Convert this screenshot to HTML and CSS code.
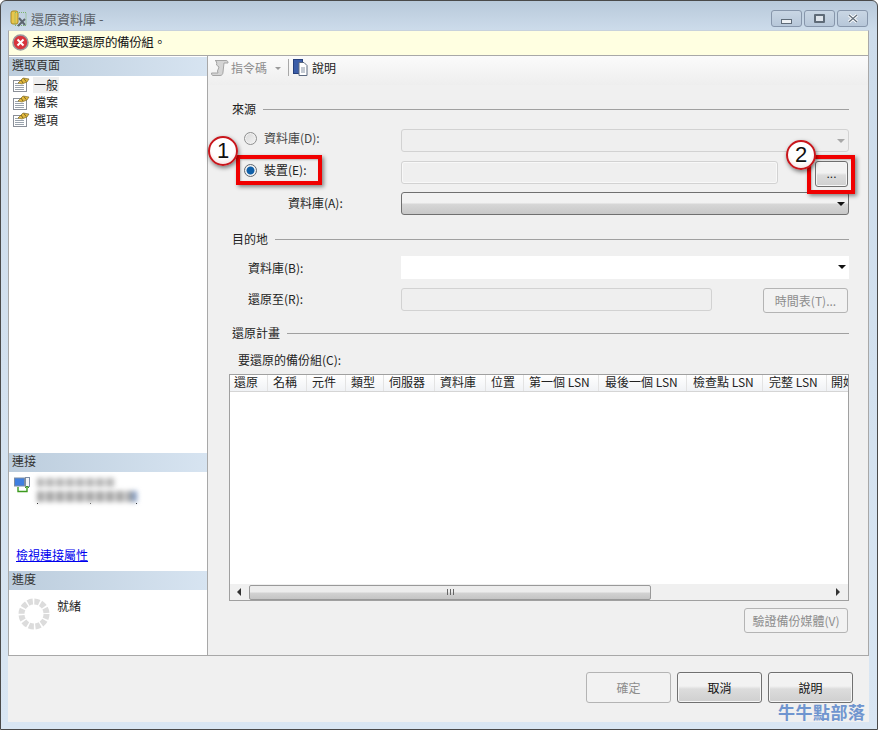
FILE: index.html
```html
<!DOCTYPE html>
<html lang="zh-Hant">
<head>
  <meta charset="UTF-8">
  <title>還原資料庫</title>
  <link rel="stylesheet" href="styles.css">
</head>
<body>
  <svg class="defs" width="0" height="0">
    <symbol id="page" viewBox="0 0 17 15">
      <rect x="0.5" y="3.5" width="13" height="11" fill="#fff" stroke="#8a8f98"/>
      <path d="M2 6.5h4M2 8.5h9M2 10.500h9M2 12.500h9" stroke="#9aa3ad"/>
      <path d="M5 6l5-5 6 1-2 3-5 2z" fill="#e3b93c" stroke="#6d5a1c" stroke-width="0.6"/>
      <path d="M8 3l2 3M11 1.500l2 3" stroke="#5f4f1a" stroke-width="0.8"/>
    </symbol>
  </svg>

  <div class="window">
    <div class="titlebar">
      <svg class="title-icon" width="18" height="18" viewBox="0 0 18 18">
        <rect x="1" y="1" width="7" height="13" rx="2" fill="#e8c64c" stroke="#a98a25"/>
        <rect x="5" y="2.500" width="11" height="13" fill="none" stroke="#7cb46a" stroke-dasharray="1 1"/>
        <path d="M8 16l7-7M9 8l6 7" stroke="#5d6670" stroke-width="2"/>
      </svg>
      <span class="title-text">還原資料庫 -</span>
      <div class="win-buttons">
        <div class="win-btn"><span class="win-min"></span></div>
        <div class="win-btn"><span class="win-max"></span></div>
        <div class="win-btn">
          <svg width="12" height="9" viewBox="0 0 12 9"><path d="M2 1l8 7M10 1L2 8" stroke="#fff" stroke-width="3"/><path d="M2 1l8 7M10 1L2 8" stroke="#5f6b78" stroke-width="1.200"/></svg>
        </div>
      </div>
    </div>

    <div class="client">
      <div class="message-bar">
        <svg width="17" height="17" viewBox="0 0 17 17">
          <circle cx="8.500" cy="8.500" r="7.500" fill="#d8343c" stroke="#9a9a9e" stroke-width="1.600"/>
          <path d="M5.500 5.500l6 6M11.500 5.500l-6 6" stroke="#fff" stroke-width="2"/>
        </svg>
        <span>未選取要還原的備份組。</span>
      </div>

      <div class="main">
        <div class="sidebar">
          <div class="side-header">選取頁面</div>
          <div class="page-list">
            <div class="page-item"><svg width="17" height="15"><use href="#page"/></svg><span class="current">一般</span></div>
            <div class="page-item"><svg width="17" height="15"><use href="#page"/></svg><span>檔案</span></div>
            <div class="page-item"><svg width="17" height="15"><use href="#page"/></svg><span>選項</span></div>
          </div>

          <div class="side-header">連接</div>
          <div class="conn-box">
            <svg width="16" height="16" viewBox="0 0 16 16">
              <rect x="0.500" y="1" width="10" height="8" fill="#3f7fe0" stroke="#7d8da3"/>
              <rect x="11.500" y="0.500" width="4" height="9" fill="#f2f4f7" stroke="#7d8da3"/>
              <path d="M4 10v4.500h9V10" fill="none" stroke="#3c9a1e" stroke-width="1.400"/>
              <path d="M11 11l2-2 2 2" fill="none" stroke="#3c9a1e"/>
            </svg>
            <div class="conn-blur">
              <div class="blur-line first"></div>
              <div class="blur-line second"></div>
              <div class="blur-ticks"></div>
            </div>
          </div>
          <a class="conn-link" href="#">檢視連接屬性</a>

          <div class="side-header">進度</div>
          <div class="progress-box">
            <svg width="32" height="32" viewBox="0 0 32 32">
              <circle cx="16" cy="16" r="12.500" fill="none" stroke="#dcdcdc" stroke-width="6" stroke-dasharray="5 1.540"/>
            </svg>
            <span>就緒</span>
          </div>
        </div>

        <div class="content">
          <div class="toolbar">
            <svg width="18" height="18" viewBox="0 0 18 18">
              <path d="M4 1.500h11c1.500 0 2 1 2 2.500h-4l-1 9c0 2-1 3.500-3 3.500H2c-1 0-1.500-1-1.500-2.500H7l-.5-2L8 8 5.500 6C6 4 5.500 1.500 4 1.500z" fill="#d4d4d4" stroke="#a4a4a4"/>
            </svg>
            <span class="tool-off">指令碼</span>
            <span class="tool-arrow"></span>
            <span class="tool-sep"></span>
            <svg width="16" height="17" viewBox="0 0 16 17">
              <rect x="0.500" y="0.500" width="9" height="14" fill="#3b5da8" stroke="#26407c"/>
              <path d="M6 3.500h5l3 3v10H6z" fill="#fff" stroke="#5c6a80"/>
              <path d="M8 9h4M8 11h4M8 13h4" stroke="#8b97a8"/>
            </svg>
            <span class="tool-help">說明</span>
          </div>

          <div class="form">
            <div class="legend"><span>來源</span><i></i></div>
            <div class="row row-a">
              <label class="radio-label off"><span class="radio"></span>資料庫(D):</label>
              <div class="field disabled grow"><span class="arrow gray"></span></div>
            </div>
            <div class="row row-b">
              <label class="radio-label"><span class="radio checked"></span>裝置(E):</label>
              <div class="field disabled text-box"></div>
              <button class="btn dots">...</button>
            </div>
            <div class="row row-c">
              <label class="plain-label db-a">資料庫(A):</label>
              <div class="field combo grow"><span class="arrow"></span></div>
            </div>

            <div class="legend second"><span>目的地</span><i></i></div>
            <div class="row row-d">
              <label class="plain-label db-b">資料庫(B):</label>
              <div class="field white grow"><span class="arrow"></span></div>
            </div>
            <div class="row row-e">
              <label class="plain-label db-b">還原至(R):</label>
              <div class="field disabled restore-box"></div>
              <button class="btn off schedule">時間表(T)...</button>
            </div>

            <div class="legend third"><span>還原計畫</span><i></i></div>
            <div class="list-label">要還原的備份組(C):</div>
            <div class="list">
              <div class="list-head">
                <span class="col w38 first">還原</span>
                <span class="col w39">名稱</span>
                <span class="col w39">元件</span>
                <span class="col w38">類型</span>
                <span class="col w51">伺服器</span>
                <span class="col w51">資料庫</span>
                <span class="col w38">位置</span>
                <span class="col w75">第一個 LSN</span>
                <span class="col w88 wide">最後一個 LSN</span>
                <span class="col w76 wide">檢查點 LSN</span>
                <span class="col w64 wide">完整 LSN</span>
                <span class="col last">開始</span>
              </div>
              <div class="list-body"></div>
              <div class="hscroll">
                <span class="scroll-arrow left"></span>
                <div class="thumb"><span class="grip"></span></div>
                <span class="scroll-arrow right"></span>
              </div>
            </div>
            <div class="verify-row"><button class="btn off verify">驗證備份媒體(V)</button></div>
          </div>
        </div>
      </div>

      <div class="footer">
        <button class="btn off dialog">確定</button>
        <button class="btn dialog">取消</button>
        <button class="btn dialog">說明</button>
      </div>
    </div>

    <!-- annotations drawn on top of the screenshot -->
    <div class="red-box box-one"></div>
    <div class="red-box box-two"></div>
    <div class="callout call-one">1</div>
    <div class="callout call-two">2</div>
    <div class="watermark">牛牛點部落</div>
  </div>
</body>
</html>
```

FILE: styles.css
```css
html, body {
  margin: 0;
  padding: 0;
}

body {
  font-family: "Noto Sans CJK TC", "Liberation Sans", sans-serif;
  font-size: 12px;
  line-height: 14px;
  color: #222;
}

.defs {
  display: block;
}

.window {
  position: relative;
  width: 878px;
  height: 730px;
  box-sizing: border-box;
  border: 1px solid #4a4a4a;
  border-radius: 6px 6px 0 0;
  background: linear-gradient(180deg, #b8c9da 0, #cddceb 30px, #d9e6f3 100%);
  overflow: hidden;
  display: flex;
  flex-direction: column;
}

.titlebar {
  height: 29px;
  display: flex;
  align-items: flex-start;
  flex-shrink: 0;
}

.title-icon {
  margin: 9px 0 0 9px;
}

.title-text {
  margin: 11px 0 0 3px;
  font-size: 13px;
  color: #5a5f66;
}

.win-buttons {
  margin: 9px 0 0 auto;
  padding-right: 9px;
  display: flex;
  gap: 2px;
}

.win-btn {
  width: 29px;
  height: 15px;
  border: 1px solid #8796ab;
  border-radius: 3px;
  background: linear-gradient(180deg, #c9d6e4, #b7c7d9);
  display: flex;
  align-items: center;
  justify-content: center;
}

.win-min {
  width: 9px;
  height: 3px;
  margin-top: 5px;
  background: #eef1f4;
  border: 1px solid #5f6b78;
}

.win-max {
  width: 7px;
  height: 5px;
  background: #dfe5ec;
  border: 2px solid #5f6b78;
  border-radius: 1px;
}

.client {
  margin: 0 8px 7px 7px;
  flex: 1;
  display: flex;
  flex-direction: column;
  min-height: 0;
}

.message-bar {
  height: 26px;
  flex-shrink: 0;
  box-sizing: border-box;
  padding: 3px 0 0 3px;
  background: #ffffe1;
  border-left: 1px solid #a8a8a8;
  border-right: 1px solid #a8a8a8;
  border-top: 1px solid #c8d2dc;
  border-bottom: 1px solid #a8a8a8;
  display: flex;
  align-items: flex-start;
  gap: 3px;
  color: #111;
}

.message-bar span {
  margin-top: 1px;
  letter-spacing: -0.35px;
  font-size: 12.500px;
}

.main {
  height: 600px;
  flex-shrink: 0;
  display: flex;
  border-left: 1px solid #a8a8a8;
  border-right: 1px solid #a8a8a8;
  border-bottom: 1px solid #a8a8a8;
  box-sizing: border-box;
}

.sidebar {
  width: 198px;
  flex-shrink: 0;
  background: #fff;
  border-right: 1px solid #a8a8a8;
  display: flex;
  flex-direction: column;
}

.side-header {
  height: 19px;
  flex-shrink: 0;
  padding: 1px 0 0 3px;
  box-sizing: border-box;
  background: linear-gradient(90deg, #bccddd, #d7e4f1);
  color: #333;
  margin-top: 1px;
}

.page-list {
  height: 376px;
  box-sizing: border-box;
}

.page-item {
  height: 17.500px;
  display: flex;
  align-items: center;
  padding-left: 4px;
  gap: 4px;
}

.page-item .current {
  background: #efefef;
  padding: 1px;
  margin: 0 -1px;
}

.conn-box {
  height: 76px;
  padding: 5px 0 0 5px;
  box-sizing: border-box;
  display: flex;
  gap: 6px;
}

.blur-line {
  filter: blur(2.500px);
}

.blur-line.first {
  width: 78px;
  height: 9px;
  margin: 1px 0 4px 1px;
  background: repeating-linear-gradient(90deg, #b4b4b4 0 6px, #dcdcdc 6px 10px);
}

.blur-line.second {
  width: 100px;
  height: 11px;
  margin-left: 1px;
  background: linear-gradient(90deg, transparent 92%, #6f8fc0), repeating-linear-gradient(90deg, #a4a4a4 0 6px, #d0d0d0 6px 10px);
}

.blur-ticks {
  width: 101px;
  height: 1px;
  margin-top: 1px;
  margin-left: 1px;
  background: linear-gradient(90deg, #222 0 1px, transparent 1px 53px, #555 53px 54px, transparent 54px 99px, #222 99px 100px, transparent 100px);
}

.conn-link {
  display: block;
  height: 22px;
  margin-left: 7px;
  color: #0000ee;
  text-decoration: underline;
}

.progress-box {
  flex: 1;
  padding: 7px 0 0 9px;
  display: flex;
  gap: 7px;
}

.progress-box svg {
  margin-top: 1px;
}

.progress-box span {
  margin-top: 2px;
}

.content {
  flex: 1;
  min-width: 0;
  background: #f0f0f0;
  display: flex;
  flex-direction: column;
}

.toolbar {
  height: 29px;
  flex-shrink: 0;
  box-sizing: border-box;
  padding: 0 0 6px 3px;
  background: linear-gradient(180deg, #fbfbfb, #eeeeee);
  display: flex;
  align-items: center;
  gap: 2px;
}

.tool-off {
  color: #8d8d8d;
}

.tool-arrow {
  width: 0;
  height: 0;
  margin: 2px 5px 0 6px;
  border-left: 3px solid transparent;
  border-right: 3px solid transparent;
  border-top: 3px solid #9a9a9a;
}

.tool-sep {
  width: 1px;
  height: 17px;
  margin-right: 2px;
  background: #a8a8a8;
}

.tool-help {
  margin-left: 1px;
}

.form {
  padding: 17px 19px 0 24px;
}

.legend {
  display: flex;
  align-items: center;
  height: 14px;
  gap: 7px;
}

.legend i {
  flex: 1;
  height: 1px;
  background: #a0a0a0;
}

.legend.second {
  margin-top: 17px;
}

.legend.third {
  margin-top: 13px;
}

.row {
  display: flex;
  align-items: flex-start;
}

.row-a {
  margin-top: 13px;
}

.row-b {
  margin-top: 9px;
}

.row-c {
  margin-top: 5px;
}

.row-d {
  margin-top: 10px;
}

.row-e {
  margin-top: 9px;
}

.radio-label,
.plain-label {
  width: 169px;
  flex-shrink: 0;
  box-sizing: border-box;
  padding-top: 4px;
  display: flex;
  align-items: center;
}

.radio-label {
  padding-top: 2px;
  padding-left: 12px;
  gap: 7px;
}

.radio-label.off {
  color: #444;
}

.row-d .plain-label {
  padding-top: 5px;
}

.plain-label.db-a {
  padding-left: 56px;
}

.plain-label.db-b {
  padding-left: 16px;
}

.radio {
  width: 11px;
  height: 11px;
  border: 1px solid #8e8f8f;
  border-radius: 50%;
  background: linear-gradient(135deg, #d8d8d8, #f4f4f4);
  box-shadow: inset 0 0 0 1px #f2f2f2;
}

.radio.checked {
  background: radial-gradient(circle, #0f5fa8 0 3.500px, #eef2f6 4.500px);
  border-color: #60666e;
}

.field {
  position: relative;
  box-sizing: border-box;
  height: 23px;
  border-radius: 3px;
}

.grow {
  flex: 1;
}

.field.disabled {
  background: #efefef;
  border: 1px solid #d2d2d2;
}

.field.combo {
  background: linear-gradient(180deg, #f2f2f2 0 45%, #d6d6d6 55%, #c8c8c8);
  border: 1px solid #707070;
}

.field.white {
  background: #fff;
  border: none;
  border-radius: 0;
}

.text-box {
  width: 377px;
  box-shadow: inset 0 0 0 1px #f8f8f8;
}

.restore-box {
  width: 311px;
  border-color: #c4c4c4;
}

.arrow {
  position: absolute;
  right: 3px;
  top: 9px;
  width: 0;
  height: 0;
  border-left: 4px solid transparent;
  border-right: 4px solid transparent;
  border-top: 4px solid #111;
}

.arrow.gray {
  border-top-color: #a8a8a8;
}

.btn {
  box-sizing: border-box;
  padding: 0;
  font-family: inherit;
  font-size: 12px;
  color: #111;
  border: 1px solid #707070;
  border-radius: 3px;
  background: linear-gradient(180deg, #f2f2f2 0 45%, #dcdcdc 55%, #cfcfcf);
  box-shadow: inset 0 0 0 1px #f6f6f6;
}

.btn.off {
  color: #8d8d8d;
  background: #f2f2f2;
  border-color: #b4b4b4;
  box-shadow: none;
}

.dots {
  width: 33px;
  height: 26px;
  margin-left: 37px;
  font-family: "Liberation Sans", sans-serif;
}

.schedule {
  width: 85px;
  height: 25px;
  margin-left: 51px;
}

.list-label {
  margin-top: 13px;
  padding-left: 6px;
}

.list {
  margin: 7px 0 0 -3px;
  height: 227px;
  box-sizing: border-box;
  border: 1px solid #a0a0a0;
  background: #fff;
  display: flex;
  flex-direction: column;
}

.list-head {
  height: 16px;
  flex-shrink: 0;
  display: flex;
  background: linear-gradient(180deg, #fff, #f0f2f5);
  border-bottom: 1px solid #d5d5d5;
}

.col {
  flex-shrink: 0;
  box-sizing: border-box;
  padding-left: 5px;
  border-right: 1px solid #e3e3e3;
  white-space: nowrap;
}

.col.first {
  padding-left: 4px;
}

.col.wide {
  padding-left: 6px;
}

.col.last {
  flex: 1;
  min-width: 0;
  padding-left: 4px;
  border-right: none;
  overflow-x: clip;
}

.w38 { width: 38px; }
.w39 { width: 39px; }
.w51 { width: 51px; }
.w64 { width: 64px; }
.w75 { width: 75px; }
.w76 { width: 76px; }
.w88 { width: 88px; }

.list-body {
  flex: 1;
}

.hscroll {
  height: 16px;
  flex-shrink: 0;
  background: #f0f0f0;
  display: flex;
  align-items: center;
}

.scroll-arrow {
  width: 0;
  height: 0;
  border-top: 4px solid transparent;
  border-bottom: 4px solid transparent;
}

.scroll-arrow.left {
  margin: 0 8px 0 7px;
  border-right: 4px solid #333;
}

.scroll-arrow.right {
  margin: 0 8px 0 auto;
  border-left: 4px solid #333;
}

.thumb {
  width: 402px;
  height: 15px;
  box-sizing: border-box;
  border: 1px solid #999;
  border-radius: 2px;
  background: linear-gradient(180deg, #ededed 0 45%, #d2d2d2 55%, #c4c4c4);
  display: flex;
  align-items: center;
  justify-content: center;
}

.grip {
  width: 7px;
  height: 6px;
  background: repeating-linear-gradient(90deg, #666 0 1px, transparent 1px 3px);
}

.verify-row {
  display: flex;
  justify-content: flex-end;
  margin-top: 7px;
  padding-right: 1px;
}

.verify {
  width: 104px;
  height: 25px;
}

.footer {
  flex: 1;
  background: #f0f0f0;
  display: flex;
  justify-content: flex-end;
  align-items: flex-start;
  gap: 6px;
  padding: 16px 16px 0 0;
}

.dialog {
  width: 85px;
  height: 31px;
}

/* annotations */
.red-box {
  position: absolute;
  box-sizing: border-box;
  border: 4px solid #f00000;
  box-shadow: 2px 2px 4px rgba(0, 0, 0, 0.45), inset 1px 1px 2px rgba(0, 0, 0, 0.25);
}

.box-one {
  left: 235px;
  top: 154px;
  width: 86px;
  height: 30px;
}

.box-two {
  left: 806px;
  top: 154px;
  width: 48px;
  height: 39px;
}

.callout {
  position: absolute;
  width: 30px;
  height: 30px;
  box-sizing: border-box;
  border: 2px solid #c8161c;
  border-radius: 50%;
  background: radial-gradient(circle at 50% 35%, #fff 55%, #f0d0d0);
  box-shadow: 1px 2px 4px rgba(0, 0, 0, 0.5);
  font-family: "Liberation Sans", sans-serif;
  font-size: 22px;
  line-height: 26px;
  text-align: center;
  color: #111;
}

.call-one {
  left: 207px;
  top: 135px;
}

.call-two {
  left: 785px;
  top: 139px;
}

.watermark {
  position: absolute;
  left: 777px;
  top: 701px;
  font-size: 17px;
  line-height: 20px;
  font-weight: 700;
  letter-spacing: 0.5px;
  color: #6f95cf;
  white-space: nowrap;
}
```
